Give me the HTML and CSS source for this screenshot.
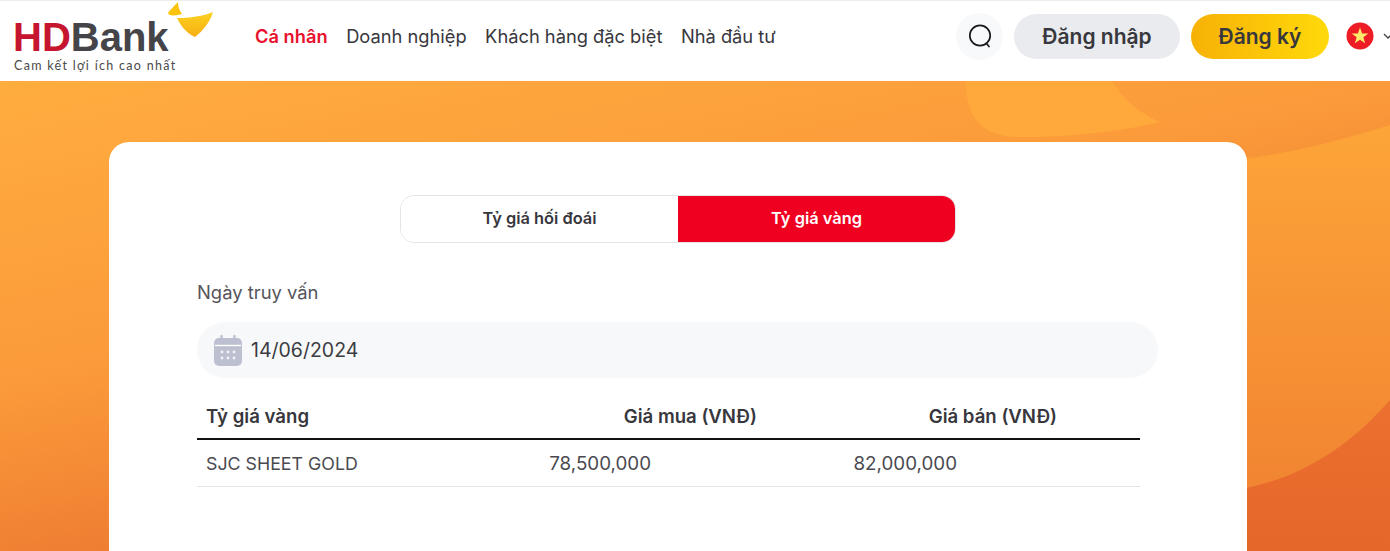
FILE: index.html
```html
<!DOCTYPE html>
<html lang="vi">
<head>
<meta charset="utf-8">
<title>HDBank - Tỷ giá vàng</title>
<link rel="stylesheet" href="styles.css">
</head>
<body>
<header class="topbar">
  <a class="logo">
    <span class="logo-name"><span class="logo-hd">HD</span>Bank</span>
    <span class="logo-tag">Cam kết lợi ích cao nhất</span>
    <svg class="logo-wing" width="46" height="40" viewBox="0 0 46 40">
      <defs>
        <linearGradient id="wing" x1="0" y1="0" x2="0" y2="1">
          <stop offset="0" stop-color="#fbd21f"/>
          <stop offset="1" stop-color="#f8ae14"/>
        </linearGradient>
      </defs>
      <path d="M10 1C6 5 2 9 0 12C0 15 8 15 14 13C11 9 10 5 10 1Z" fill="#fcc30b"/>
      <path d="M45 11C35 15 22 17 9 17C13 26 20 33 27 36C35 30 42 21 45 11Z" fill="url(#wing)"/>
    </svg>
  </a>
  <nav class="nav">
    <a class="nav-link nav-active">Cá nhân</a>
    <a class="nav-link">Doanh nghiệp</a>
    <a class="nav-link">Khách hàng đặc biệt</a>
    <a class="nav-link">Nhà đầu tư</a>
  </nav>
  <div class="actions">
    <button class="search" aria-label="Tìm kiếm">
      <svg width="26" height="26" viewBox="0 0 26 26" fill="none" stroke="#1b1b1f" stroke-width="1.7" stroke-linecap="round">
        <circle cx="13" cy="12.5" r="10.2"/>
        <path d="M19.5 20.5L22 23.5"/>
      </svg>
    </button>
    <button class="btn btn-login">Đăng nhập</button>
    <button class="btn btn-register">Đăng ký</button>
    <svg class="flag" width="28" height="28" viewBox="0 0 28 28">
      <circle cx="14" cy="14" r="13.5" fill="#ee1c25"/>
      <path d="M14 5.5L16.1 11.4L22.3 11.5L17.4 15.3L19.1 21.3L14 17.8L8.9 21.3L10.6 15.3L5.7 11.5L11.9 11.4Z" fill="#ffe96b"/>
    </svg>
    <svg class="chevron" width="10" height="6" viewBox="0 0 10 6" fill="none" stroke="#444" stroke-width="1.3">
      <path d="M1 1L5 5L9 1"/>
    </svg>
  </div>
</header>

<main class="hero">
  <svg class="hero-shape" width="210" height="60" viewBox="0 0 210 60">
    <path d="M0 0H147C156 14 170 30 195 41C160 50 100 57 52 56C20 55 6 40 2 16Z" fill="#ffa83b"/>
  </svg>
  <svg class="hero-band" width="150" height="470" viewBox="0 0 150 470">
    <defs>
      <linearGradient id="band" x1="0" y1="0" x2="0" y2="1">
        <stop offset="0" stop-color="#fda538"/>
        <stop offset="1" stop-color="#ef7f31"/>
      </linearGradient>
      <linearGradient id="corner" x1="0" y1="0" x2="0" y2="1">
        <stop offset="0" stop-color="#ec7030"/>
        <stop offset="1" stop-color="#e5672a"/>
      </linearGradient>
    </defs>
    <path d="M0 78C55 72 105 58 150 44V470H0Z" fill="url(#band)"/>
    <path d="M0 408C60 398 110 365 150 319V470H0Z" fill="url(#corner)"/>
  </svg>
  <section class="card">
    <div class="tabs">
      <button class="tab">Tỷ giá hối đoái</button>
      <button class="tab tab-active">Tỷ giá vàng</button>
    </div>
    <label class="field-label">Ngày truy vấn</label>
    <div class="date-field">
      <svg width="30" height="31" viewBox="0 0 30 31">
        <path d="M6 3h18a5 5 0 0 1 5 5v18a5 5 0 0 1-5 5H6a5 5 0 0 1-5-5V8a5 5 0 0 1 5-5Z" fill="#bcc0d0"/>
        <path d="M1.8 10.5h26.4" stroke="#fff" stroke-width="1.4"/>
        <path d="M8.5 1v6M21.5 1v6" stroke="#bcc0d0" stroke-width="2.4" stroke-linecap="round"/>
        <g fill="#f3f4f8">
          <circle cx="9" cy="17" r="1.4"/><circle cx="15" cy="17" r="1.4"/><circle cx="21" cy="17" r="1.4"/>
          <circle cx="9" cy="23" r="1.4"/><circle cx="15" cy="23" r="1.4"/><circle cx="21" cy="23" r="1.4"/>
        </g>
      </svg>
      <span>14/06/2024</span>
    </div>
    <div class="rates">
      <div class="rates-head">
        <span>Tỷ giá vàng</span>
        <span>Giá mua (VNĐ)</span>
        <span>Giá bán (VNĐ)</span>
      </div>
      <div class="rates-row">
        <span>SJC SHEET GOLD</span>
        <span class="num">78,500,000</span>
        <span class="num">82,000,000</span>
      </div>
    </div>
  </section>
</main>
</body>
</html>
```
FILE: styles.css
```css
* { box-sizing: border-box; }
html, body { margin: 0; height: 100%; overflow: hidden; }
body {
  width: 1390px;
  height: 551px;
  font-family: Inter, "Noto Sans", sans-serif;
  color: #37373d;
  background: #fff;
  display: flex;
  flex-direction: column;
}
button { font-family: inherit; border: 0; cursor: pointer; padding: 0; }

.topbar {
  flex: 0 0 81px;
  display: flex;
  align-items: center;
  background: #fff;
  border-top: 1px solid #ececec;
  padding: 0 0 10px 14px;
  overflow: hidden;
}
.logo {
  position: relative;
  flex: 0 0 241px;
  height: 70px;
  display: flex;
  flex-direction: column;
}
.logo-name {
  font-family: "Liberation Sans", sans-serif;
  font-size: 40px;
  font-weight: 700;
  letter-spacing: 0;
  line-height: 40px;
  margin: 16px 0 0 -1px;
  color: #454549;
}
.logo-hd { color: #c5152f; }
.logo-tag {
  font-family: Lato, sans-serif;
  font-size: 12.5px;
  line-height: 14px;
  margin-top: 2px;
  letter-spacing: 1.3px;
  color: #4a4a4a;
  white-space: nowrap;
}
.logo-wing { position: absolute; left: 154px; top: 0; }

.nav { display: flex; gap: 18.5px; }
.nav-link { font-size: 18.3px; color: #37373d; white-space: nowrap; }
.nav-active { color: #e8112d; font-weight: 600; }

.actions {
  margin-left: auto;
  display: flex;
  align-items: center;
  gap: 11px;
  flex: 0 0 434px;
  padding-left: 0;
  width: 434px;
  transform: none;
}
.search {
  flex: none;
  width: 47px;
  height: 47px;
  border-radius: 50%;
  background: #f8f9fb;
  display: flex;
  align-items: center;
  justify-content: center;
}
.btn {
  flex: none;
  height: 45px;
  border-radius: 23px;
  font-size: 21px;
  font-weight: 600;
  color: #37373d;
}
.btn-login { width: 166px; background: #e9ebee; }
.btn-register { width: 138px; background: linear-gradient(90deg, #f7b106, #ffd90a); }
.flag { flex: none; margin-left: 6px; }
.chevron { flex: none; margin-left: -2px; }

.hero {
  position: relative;
  flex: 1;
  overflow: hidden;
  background: linear-gradient(168deg, #ffad3f 0%, #fb9a3a 40%, #ee7d32 65%, #e86c2e 100%);
  padding: 61px 143px 0 109px;
}
.hero-shape { position: absolute; left: 965px; top: 0; }
.hero-band { position: absolute; left: 1240px; top: 0; }

.card {
  position: relative;
  width: 1138px;
  height: 440px;
  background: #fff;
  border-radius: 20px;
  padding: 53px 89px 0 88px;
}
.tabs {
  display: flex;
  width: 556px;
  height: 48px;
  margin: 0 0 38px 203px;
  border: 1px solid #e3e4e8;
  border-radius: 14px;
  overflow: hidden;
}
.tab {
  flex: 1;
  font-size: 16.4px;
  font-weight: 600;
  padding-bottom: 2px;
  background: #fff;
  color: #37373d;
}
.tab-active { background: #f00020; color: #fff; }

.field-label {
  display: block;
  font-size: 18.4px;
  line-height: 22px;
  color: #55555b;
}
.date-field {
  display: flex;
  align-items: center;
  gap: 8px;
  height: 56px;
  width: 961px;
  margin-top: 19px;
  padding-left: 16px;
  border-radius: 28px;
  background: #f7f8fa;
  font-size: 19.5px;
  color: #3c3c42;
}

.rates { width: 943px; margin-top: 16px; font-size: 18px; }
.rates-head, .rates-row { display: grid; padding-left: 9px; white-space: nowrap; }
.rates-head {
  grid-template-columns: 200px 351px 300px;
  height: 46px;
  align-items: center;
  font-size: 18.6px;
  font-weight: 600;
  color: #37373d;
  border-bottom: 2px solid #111;
}
.rates-head span:nth-child(n+2), .num { text-align: right; }
.rates-row {
  grid-template-columns: 200px 245px 306px;
  height: 47px;
  align-items: center;
  font-size: 17.8px;
  color: #4a4a50;
  border-bottom: 1px solid #e2e3e6;
}
.num { font-size: 18.8px; }
```
